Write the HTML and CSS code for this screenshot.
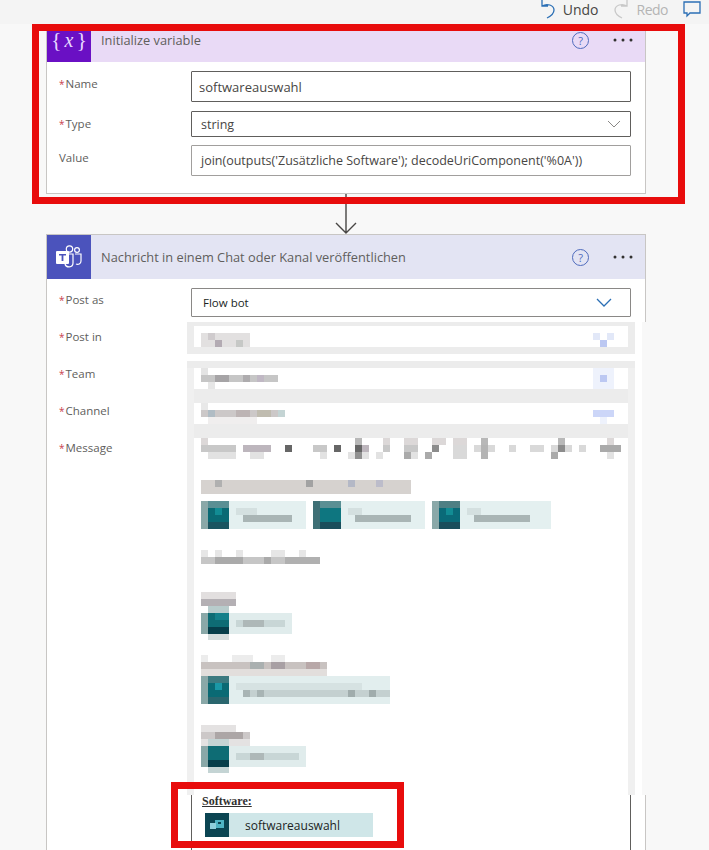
FILE: index.html
```html
<!DOCTYPE html>
<html lang="en">
<head><meta charset="UTF-8"/><meta name="viewport" content="width=device-width, initial-scale=1.0"/>
<title>Flow designer</title>
<link rel="stylesheet" href="styles.css">
</head><body>
<div class="page">
 <div class="topbar">
  <button class="tool"><svg width="14" height="20" viewBox="0 0 14 20"><path d="M1 1v6h6M1 7c5-3 12-1 12 4 0 3-3 6-7 8" fill="none" stroke="#2b6fb5" stroke-width="1.3"/></svg><span>Undo</span></button>
  <button class="tool off"><svg width="14" height="20" viewBox="0 0 14 20"><path d="M13 1v6H7M13 7C8 4 1 6 1 11c0 3 3 6 7 8" fill="none" stroke="#c8c8c8" stroke-width="1.3"/></svg><span>Redo</span></button>
  <svg class="comment" width="18" height="18" viewBox="0 0 18 18"><path d="M1 2h16v11H7l-3 3v-3H1z" fill="none" stroke="#2b6fb5" stroke-width="1.3"/></svg>
 </div>

 <div class="card var">
  <div class="card-head">
   <div class="card-icon"><span class="brace">{</span><i>x</i><span class="brace">}</span></div>
   <div class="card-title">Initialize variable</div>
   <span class="help">?</span>
   <svg class="dots" width="20" height="4" viewBox="0 0 20 4"><circle cx="2" cy="2" r="1.500"/><circle cx="10" cy="2" r="1.500"/><circle cx="18" cy="2" r="1.500"/></svg>
  </div>
  <div class="card-body">
   <div class="row"><label><b>*</b>Name</label><div class="field h31 big">softwareauswahl</div></div>
   <div class="row tight"><label><b>*</b>Type</label><div class="field h26 in2">string<svg class="chev" width="14" height="8" viewBox="0 0 14 8"><path d="M1 1l6 6 6-6" fill="none" stroke="#8a8886"/></svg></div></div>
   <div class="row"><label>Value</label><div class="field h31 in2 soft">join(outputs('Zusätzliche Software'); decodeUriComponent('%0A'))</div></div>
  </div>
 </div>

 <div class="connector"><svg width="22" height="40" viewBox="0 0 22 40"><path d="M11 0v39M1 29l10 10 10-10" fill="none" stroke="#484644" stroke-width="1.4"/></svg></div>

 <div class="card teams">
  <div class="card-head">
   <div class="card-icon"><svg width="28" height="26" viewBox="0 0 28 26"><circle cx="14.5" cy="5" r="3.2" fill="none" stroke="#fff" stroke-width="1.2"/><circle cx="22" cy="6" r="2.4" fill="none" stroke="#fff" stroke-width="1.2"/><path d="M10 10h8v9c0 5-7 5-8 1M20 10h6v7c0 3-3 4-5 3" fill="none" stroke="#fff" stroke-width="1.2"/><rect x="1" y="7" width="13" height="13" rx="1" fill="#fff"/><path d="M4 10h7v1.5H8.400V17H6.600v-5.500H4z" fill="#4b53bc"/></svg></div>
   <div class="card-title">Nachricht in einem Chat oder Kanal veröffentlichen</div>
   <span class="help">?</span>
   <svg class="dots" width="20" height="4" viewBox="0 0 20 4"><circle cx="2" cy="2" r="1.500"/><circle cx="10" cy="2" r="1.500"/><circle cx="18" cy="2" r="1.500"/></svg>
  </div>
  <div class="card-body">
   <div class="row"><label><b>*</b>Post as</label><div class="field h29 in3 ink">Flow bot<svg class="chev chev-blue" width="16" height="9" viewBox="0 0 16 9"><path d="M1 1l7 7 7-7" fill="none" stroke="#2b6fb5" stroke-width="1.3"/></svg></div></div>
   <div class="row"><label><b>*</b>Post in</label><div class="field h29"></div></div>
   <div class="row"><label><b>*</b>Team</label><div class="field h29"></div></div>
   <div class="row"><label><b>*</b>Channel</label><div class="field h29"></div></div>
   <div class="row"><label><b>*</b>Message</label>
    <div class="field message">
     <div class="msg-head">Software:</div>
     <div class="token"><span class="token-icon"><svg width="14" height="12" viewBox="0 0 14 12"><rect x="5" y="1" width="9" height="8" fill="#4fb4c4"/><rect x="0" y="4" width="6" height="6" fill="#8fd0dc"/><rect x="8" y="3" width="3" height="2" fill="#0b4552"/></svg></span><span class="token-text">softwareauswahl</span></div>
    </div>
   </div>
  </div>
 </div>

 <!-- blurred parts of the screenshot, drawn in page coordinates -->
 <svg class="mosaic" width="709" height="850" viewBox="0 0 709 850" shape-rendering="crispEdges">
  <rect x="187" y="322" width="463" height="473" fill="#fff"/>
  <rect x="642" y="322" width="8" height="473" fill="#f8f8f8"/>
  <g fill="#ececec">
   <rect x="187" y="322" width="448" height="4"/><rect x="187" y="347" width="448" height="7"/>
   <rect x="187" y="361" width="448" height="7"/><rect x="187" y="389" width="448" height="14"/><rect x="194" y="424" width="434" height="14"/>
   <rect x="187" y="326" width="7" height="21"/><rect x="628" y="326" width="7" height="21"/>
  </g>
  <g fill="#f0f0f0">
   <rect x="187" y="368" width="7" height="427"/><rect x="628" y="368" width="7" height="427"/>
  </g>

  <!-- post in -->
  <rect x="201" y="333" width="49" height="14" fill="#e2e0e0"/>
  <rect x="208" y="333" width="7" height="7" fill="#cfcbcd"/><rect x="215" y="340" width="7" height="7" fill="#b3abb3"/><rect x="236" y="340" width="7" height="7" fill="#c6c8c6"/>
  <rect x="593" y="333" width="7" height="7" fill="#e2e8f8"/><rect x="607" y="333" width="7" height="7" fill="#e2e8f8"/><rect x="600" y="340" width="7" height="7" fill="#bcc8f2"/>

  <!-- team -->
  <rect x="201" y="368" width="7" height="7" fill="#e4e4e4"/>
  <rect x="201" y="375" width="77" height="7" fill="#c6c6c6"/><rect x="215" y="375" width="14" height="7" fill="#a6a4a6"/><rect x="243" y="375" width="7" height="7" fill="#aeacae"/><rect x="257" y="375" width="7" height="7" fill="#c0b8c4"/><rect x="208" y="382" width="7" height="7" fill="#e6e6e6"/>
  <rect x="593" y="368" width="21" height="21" fill="#eef2fc"/><rect x="600" y="375" width="7" height="7" fill="#bcc8f2"/>

  <!-- channel -->
  <rect x="201" y="403" width="7" height="7" fill="#e8e8e8"/>
  <rect x="201" y="410" width="84" height="7" fill="#ccc8c8"/><rect x="208" y="410" width="7" height="7" fill="#b0bcc4"/><rect x="236" y="410" width="14" height="7" fill="#bdb4b4"/><rect x="257" y="410" width="14" height="7" fill="#c0bcb0"/><rect x="278" y="410" width="7" height="7" fill="#c4d4d4"/>
  <rect x="208" y="417" width="49" height="7" fill="#f0eeee"/>
  <rect x="593" y="410" width="21" height="7" fill="#ccd6f8"/><rect x="600" y="417" width="7" height="7" fill="#eef2fc"/>

  <!-- message line -->
  <g fill="#dcd8d8"><rect x="201" y="438" width="7" height="7"/><rect x="383" y="438" width="7" height="7"/><rect x="404" y="438" width="14" height="7"/><rect x="432" y="438" width="7" height="7"/><rect x="439" y="438" width="7" height="7"/><rect x="453" y="438" width="14" height="7"/><rect x="607" y="438" width="7" height="7"/></g>
  <g fill="#b8b8b8"><rect x="355" y="438" width="7" height="7"/><rect x="558" y="438" width="7" height="7"/><rect x="481" y="438" width="7" height="7"/></g>
  <g fill="#c8c8c8"><rect x="201" y="445" width="35" height="7"/><rect x="313" y="445" width="14" height="7"/><rect x="383" y="445" width="7" height="7"/><rect x="404" y="445" width="14" height="7"/></g>
  <g fill="#bdb6bd"><rect x="243" y="445" width="28" height="7"/><rect x="362" y="445" width="7" height="7"/></g>
  <g fill="#666"><rect x="285" y="445" width="7" height="7"/><rect x="334" y="445" width="7" height="7"/><rect x="355" y="445" width="7" height="7"/></g>
  <g fill="#d9d9d9"><rect x="453" y="445" width="14" height="14"/><rect x="474" y="445" width="7" height="7"/><rect x="488" y="445" width="7" height="7"/><rect x="509" y="445" width="7" height="7"/><rect x="530" y="445" width="14" height="7"/><rect x="551" y="445" width="7" height="7"/><rect x="565" y="445" width="7" height="7"/><rect x="579" y="445" width="7" height="7"/></g>
  <g fill="#b4b4b4"><rect x="481" y="445" width="7" height="14"/></g>
  <g fill="#8c8c8c"><rect x="432" y="445" width="7" height="7"/><rect x="558" y="445" width="7" height="7"/></g>
  <g fill="#aaa"><rect x="600" y="445" width="21" height="7"/><rect x="404" y="452" width="7" height="7"/><rect x="425" y="452" width="7" height="7"/><rect x="551" y="452" width="7" height="7"/></g>
  <g fill="#909090"><rect x="355" y="452" width="7" height="7"/></g>
  <g fill="#e2e2e2"><rect x="208" y="452" width="28" height="7"/><rect x="250" y="452" width="14" height="7"/><rect x="320" y="452" width="7" height="7"/><rect x="348" y="452" width="7" height="7"/><rect x="362" y="452" width="7" height="7"/><rect x="376" y="452" width="7" height="7"/><rect x="411" y="452" width="7" height="7"/><rect x="607" y="452" width="7" height="7"/></g>

  <!-- heading 1 -->
  <rect x="201" y="480" width="210" height="14" fill="#d6d2cf"/>
  <rect x="215" y="480" width="7" height="7" fill="#b0b0b0"/><rect x="306" y="480" width="7" height="7" fill="#a2a2a2"/><rect x="348" y="480" width="7" height="7" fill="#b4b8c6"/><rect x="376" y="480" width="7" height="7" fill="#bcbcca"/>

  <!-- first row of chips -->
  <g fill="#e4f0f0"><rect x="229" y="501" width="77" height="28"/><rect x="341" y="501" width="84" height="28"/><rect x="460" y="501" width="91" height="28"/></g>
  <g fill="#a9b5b5"><rect x="243" y="515" width="49" height="7"/><rect x="355" y="515" width="56" height="7"/><rect x="474" y="515" width="56" height="7"/></g>
  <g fill="#d4e0e0"><rect x="236" y="508" width="21" height="7"/><rect x="348" y="508" width="14" height="7"/><rect x="467" y="508" width="14" height="7"/></g>

  <!-- heading 2 -->
  <rect x="201" y="550" width="7" height="7" fill="#e6e6e6"/><rect x="215" y="550" width="7" height="7" fill="#e6e6e6"/><rect x="236" y="550" width="7" height="7" fill="#e6e6e6"/><rect x="271" y="550" width="14" height="7" fill="#e6e6e6"/><rect x="299" y="550" width="7" height="7" fill="#e6e6e6"/>
  <rect x="201" y="557" width="119" height="7" fill="#c6c6c6"/><rect x="215" y="557" width="28" height="7" fill="#aaa"/><rect x="264" y="557" width="7" height="7" fill="#aaa"/><rect x="285" y="557" width="35" height="7" fill="#b0b0b0"/>

  <!-- group a -->
  <rect x="201" y="592" width="35" height="7" fill="#e2dfdf"/><rect x="201" y="599" width="35" height="7" fill="#b4b0b4"/>
  <rect x="229" y="613" width="63" height="21" fill="#e0ecec"/><rect x="236" y="620" width="49" height="7" fill="#c8d6d6"/><rect x="243" y="620" width="21" height="7" fill="#aeb8b8"/>

  <!-- group b -->
  <rect x="201" y="655" width="7" height="7" fill="#ececec"/><rect x="232" y="655" width="21" height="7" fill="#ececec"/><rect x="271" y="655" width="14" height="7" fill="#ececec"/>
  <rect x="201" y="662" width="126" height="7" fill="#c8c2c0"/><rect x="250" y="662" width="14" height="7" fill="#aab0b0"/><rect x="271" y="662" width="14" height="7" fill="#a8a0a4"/><rect x="306" y="662" width="14" height="7" fill="#b8a8a8"/>
  <rect x="201" y="669" width="126" height="7" fill="#e2dedc"/>
  <rect x="229" y="676" width="161" height="28" fill="#e2eeee"/><rect x="236" y="683" width="126" height="7" fill="#d6e2e2"/><rect x="243" y="690" width="147" height="7" fill="#c4d0d0"/><rect x="243" y="690" width="7" height="7" fill="#a8b4b4"/><rect x="257" y="690" width="7" height="7" fill="#a8b4b4"/><rect x="348" y="690" width="7" height="7" fill="#a0acac"/><rect x="369" y="690" width="7" height="7" fill="#a0acac"/>

  <!-- group c -->
  <rect x="201" y="725" width="35" height="7" fill="#e4e2e2"/><rect x="201" y="732" width="49" height="7" fill="#ccc8c8"/><rect x="215" y="732" width="28" height="7" fill="#aca6a6"/><rect x="201" y="739" width="49" height="7" fill="#e4e2e2"/>
  <rect x="229" y="746" width="77" height="21" fill="#e0ecec"/><rect x="236" y="753" width="63" height="7" fill="#c8d6d6"/><rect x="250" y="753" width="14" height="7" fill="#aeb8b8"/>

  <!-- chip icons -->
  <g>
   <rect x="201" y="501" width="28" height="28" fill="#8aa8a8"/><rect x="208" y="508" width="21" height="14" fill="#0a6a74"/><rect x="208" y="501" width="21" height="7" fill="#5a8f94"/><rect x="208" y="522" width="21" height="7" fill="#1a5460"/><rect x="215" y="508" width="7" height="7" fill="#128c94"/>
   <rect x="313" y="501" width="28" height="28" fill="#3f7076"/><rect x="320" y="508" width="21" height="14" fill="#0e7680"/><rect x="320" y="501" width="21" height="7" fill="#5a8f94"/><rect x="320" y="522" width="21" height="7" fill="#1a4e5c"/>
   <rect x="432" y="501" width="28" height="28" fill="#8aa8a8"/><rect x="439" y="508" width="21" height="14" fill="#0a6a78"/><rect x="439" y="501" width="21" height="7" fill="#4e7f84"/><rect x="439" y="522" width="21" height="7" fill="#1a4e5c"/><rect x="446" y="508" width="7" height="7" fill="#128c94"/>
   <rect x="208" y="606" width="21" height="7" fill="#b8cccc"/><rect x="201" y="613" width="28" height="21" fill="#8aa8a8"/><rect x="208" y="613" width="21" height="14" fill="#0e6c74"/><rect x="208" y="634" width="21" height="6" fill="#d4dddd"/><rect x="208" y="627" width="21" height="7" fill="#063e4a"/><rect x="215" y="613" width="14" height="7" fill="#14808a"/>
   <rect x="201" y="676" width="28" height="28" fill="#8aa8a8"/><rect x="208" y="676" width="21" height="7" fill="#3c7a80"/><rect x="208" y="683" width="21" height="14" fill="#0a6a74"/><rect x="215" y="683" width="7" height="7" fill="#1a98a6"/><rect x="208" y="697" width="21" height="7" fill="#2a666e"/>
   <rect x="208" y="739" width="21" height="7" fill="#c4d4d4"/><rect x="201" y="746" width="28" height="21" fill="#8aa8a8"/><rect x="208" y="746" width="21" height="14" fill="#0e6c74"/><rect x="208" y="760" width="21" height="7" fill="#063e4a"/><rect x="208" y="767" width="21" height="6" fill="#c4d4d4"/>
  </g>
 </svg>

 <div class="frame frame-top"></div>
 <div class="frame frame-bottom"></div>
</div>
</body></html>
```

FILE: styles.css
```css
html,body{margin:0;height:100%;}
body{font-family:"Open Sans",sans-serif;color:#605e5c;}
.page{position:relative;width:709px;height:850px;overflow:hidden;background:#f8f8f8;}

.topbar{position:relative;z-index:2;box-sizing:border-box;height:24px;padding:0 8px 6px 0;background:#f4f4f4;display:flex;align-items:center;justify-content:flex-end;gap:15px;}
.tool{display:flex;align-items:center;gap:8px;border:none;background:none;padding:0;font:14px "Open Sans",sans-serif;color:#484644;}
.tool.off{color:#b4b4b4;letter-spacing:-.5px;gap:9px;}

.card{width:598px;margin-left:46px;background:#fff;border:1px solid #c8c6c4;}
.var{margin-top:-7px;}
.card-head{height:44px;display:flex;align-items:center;}
.var .card-head{background:#e9daf6;}
.teams .card-head{background:#e3e4f3;}
.card-icon{width:44px;height:44px;flex:none;display:flex;align-items:center;justify-content:center;color:#e6d6ff;}
.var .card-icon{background:#6a10c4;font:italic 20px "Liberation Serif",serif;gap:3px;}
.teams .card-icon{background:#4b53bc;}
.brace{font-style:normal;font-size:22px;}
.card-title{flex:1;margin-left:10px;font-size:12.800px;color:#605e5c;}
.help{width:15px;height:15px;border:1px solid #4f6bbd;border-radius:50%;font-size:11px;line-height:15px;text-align:center;color:#4f6bbd;margin-right:24px;}
.dots{fill:#323130;margin-right:12px;}

.card-body{padding:9px 14px 17px 12px;}
.row{display:flex;margin-bottom:9px;}
.row.tight{margin-bottom:8px;}
.row:last-child{margin-bottom:0;}
.row label{width:132px;flex:none;padding-top:5px;font-size:11.500px;line-height:16px;color:#605e5c;}
.row label b{color:#c8404c;font-weight:400;font-size:10px;margin-right:1px;}
.field{flex:1;box-sizing:border-box;display:flex;align-items:center;justify-content:space-between;border:1px solid #605e5c;border-radius:1px;padding:0 7px;font-size:12.500px;color:#484644;}
.h31{height:31px;}
.h26{height:26px;}
.h29{height:29px;}
.big{font-size:13px;}
.in2{padding-left:9px;}
.in3{padding-left:11px;}
.soft{border-color:#a19f9d;}
.ink{color:#201f1e;font-size:11.500px;border-color:#8a8886;}
.chev{margin-right:2px;}
.chev-blue{margin-right:11px;}
.teams .row{margin-bottom:8px;}
.teams .row label{padding-top:4px;}
.teams .card-body{padding-top:9px;}

.message{height:480px;display:block;padding:0;position:relative;}
.msg-head{position:absolute;left:10px;top:357px;font:bold 12px "Liberation Serif",serif;text-decoration:underline;color:#323130;}
.token{position:absolute;left:13px;top:376px;width:168px;height:24px;display:flex;align-items:center;background:#cfe6e8;color:#201f1e;}
.token-icon{width:24px;height:24px;background:#0b4552;display:flex;align-items:center;justify-content:center;}
.token-text{margin-left:16px;font-size:12px;}

.connector{width:22px;height:40px;margin-left:335px;}
.connector svg{display:block;}

.mosaic{position:absolute;left:0;top:0;}
.frame{position:absolute;box-sizing:border-box;border:7px solid #e80c0c;}
.frame-top{left:32px;top:24px;width:653px;height:180px;}
.frame-bottom{left:171px;top:782px;width:233px;height:66px;}
```
